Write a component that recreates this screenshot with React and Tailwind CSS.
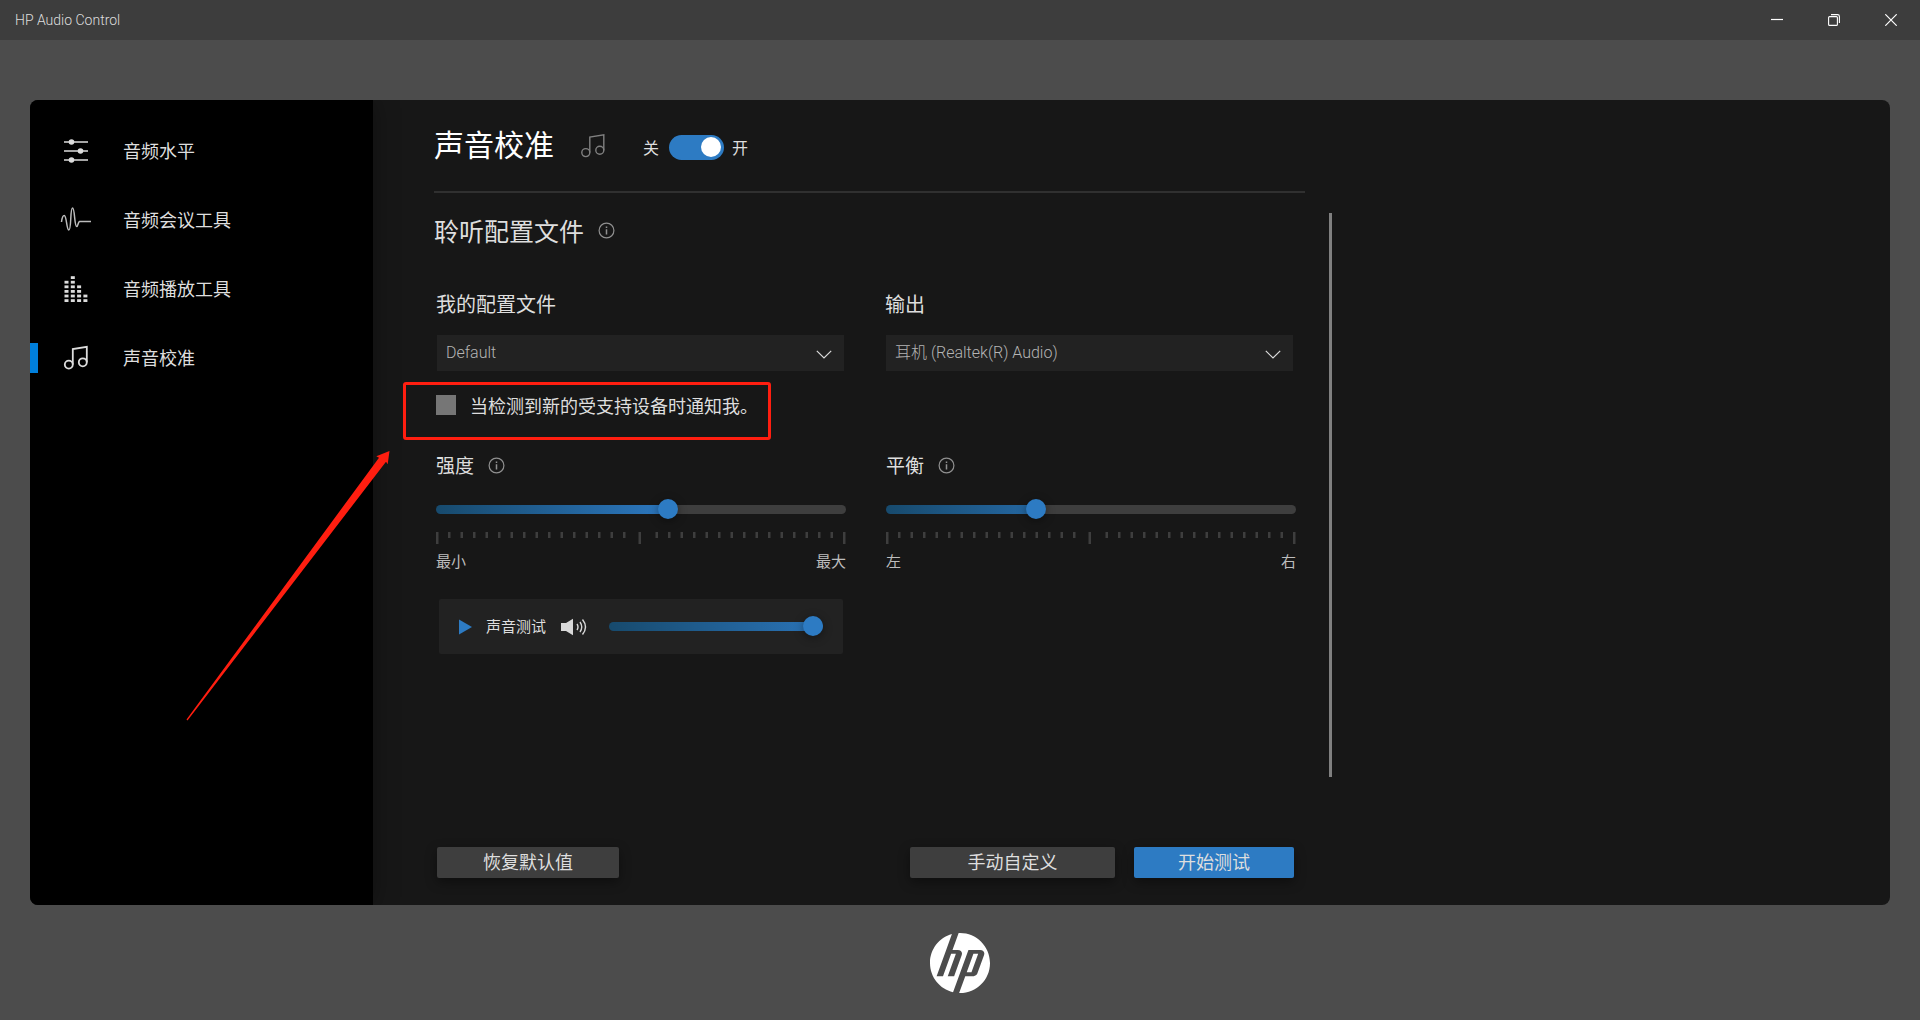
import { useState } from "react";
import { SiHp } from "react-icons/si";

const TICKS = [
  ...Array.from({ length: 15 }, (_, i) => 13.5 + i * 12.5),
  ...Array.from({ length: 15 }, (_, i) => 221 + i * 12.5),
];

function LevelsIcon() {
  return (
    <svg width="32" height="32" viewBox="0 0 32 32" fill="#dcdcdc" stroke="#dcdcdc" aria-hidden="true">
      <path d="M4 7h24M4 16h24M4 25h24" strokeWidth="1.4" />
      <circle cx="11.5" cy="7" r="2.8" stroke="none" />
      <circle cx="20.5" cy="16" r="2.8" stroke="none" />
      <circle cx="11.5" cy="25" r="2.8" stroke="none" />
    </svg>
  );
}

function WaveIcon() {
  return (
    <svg width="32" height="32" viewBox="0 0 32 32" fill="none" stroke="#bcbcbc" strokeWidth="1.5" aria-hidden="true">
      <path d="M1.5 18C2 14 3 11.5 4.2 11.5C6.8 11.5 6.4 26 8.8 26C11.6 26 10 4 12.5 4C15 4 14.2 22.5 16.8 22.5C18 22.5 18 18 19.5 17.5H31" />
    </svg>
  );
}

function BarsIcon() {
  const columns = [5, 6, 4, 2];
  return (
    <svg width="32" height="32" viewBox="0 0 32 32" fill="#dcdcdc" aria-hidden="true">
      {columns.map((count, col) =>
        Array.from({ length: count }, (_, row) => (
          <rect key={`${col}-${row}`} x={4.5 + col * 6.3} y={26.2 - row * 4.6} width="4" height="2.8" />
        ))
      )}
    </svg>
  );
}

function MusicIcon({ color = "#dcdcdc", width = 1.8 }) {
  return (
    <svg width="26" height="26" viewBox="0 0 26 26" fill="none" stroke={color} strokeWidth={width} aria-hidden="true">
      <circle cx="5.8" cy="19.6" r="4" />
      <circle cx="19.8" cy="17.3" r="4" />
      <path d="M9.8 19.6V4L23.8 1.9V17.3" />
    </svg>
  );
}

function InfoIcon() {
  return (
    <svg width="17" height="17" viewBox="0 0 17 17" fill="none" stroke="#909090" aria-hidden="true">
      <circle cx="8.5" cy="8.5" r="7.4" strokeWidth="1.2" />
      <path d="M8.5 7.2V12.5M8.5 4.5V6" strokeWidth="1.5" />
    </svg>
  );
}

function SpeakerIcon() {
  return (
    <svg width="26" height="18" viewBox="0 0 26 18" fill="none" stroke="#d8d8d8" strokeWidth="1.4" aria-hidden="true">
      <path d="M0 5H5L12 0.8V17.2L5 13H0Z" fill="#d8d8d8" stroke="none" />
      <path d="M16 6Q18 9 16 12M19 4Q22.5 9 19 14M21.500 1.500Q27.500 9 21.500 16.500" />
    </svg>
  );
}

function NavItem({ icon, label, active, onClick }) {
  return (
    <button
      type="button"
      onClick={onClick}
      className="relative flex h-[69px] w-full items-center gap-[31px] pl-[30px] text-left text-[18px]"
    >
      {active && <span className="absolute left-0 h-[30px] w-2 bg-[#007fdb]" />}
      <span className="flex w-8 justify-center">{icon}</span>
      {label}
    </button>
  );
}

function Select({ id, label, options }) {
  return (
    <div>
      <label htmlFor={id} className="block text-[20px] leading-6">
        {label}
      </label>
      <div className="relative mx-px mt-[19px]">
        <select
          id={id}
          className="block h-9 w-full appearance-none bg-[#222222] px-[9px] font-['Roboto','Noto_Sans_CJK_SC',sans-serif] text-[16px] font-light text-[#b4b4b4]"
        >
          {options.map((option) => (
            <option key={option}>{option}</option>
          ))}
        </select>
        <svg
          className="pointer-events-none absolute top-[15px] right-3"
          width="16"
          height="9"
          viewBox="0 0 16 9"
          fill="none"
          stroke="#dcdcdc"
          strokeWidth="1.2"
          aria-hidden="true"
        >
          <path d="M0.8 0.8L8 8L15.2 0.8" />
        </svg>
      </div>
    </div>
  );
}

function Slider({ id, label, value, onChange }) {
  return (
    <input
      id={id}
      type="range"
      aria-label={label}
      value={value}
      onChange={(e) => onChange(Number(e.target.value))}
      style={{
        backgroundImage: `linear-gradient(to right, transparent ${value}%, #3e3e3e ${value}%), linear-gradient(to right, #174a6d, #2c77be 230px)`,
      }}
      className="block h-[9px] w-full min-w-0 appearance-none rounded-full [&::-webkit-slider-thumb]:size-5 [&::-webkit-slider-thumb]:-translate-y-px [&::-webkit-slider-thumb]:appearance-none [&::-webkit-slider-thumb]:rounded-full [&::-webkit-slider-thumb]:bg-[#2d7bc3] [&::-webkit-slider-thumb]:shadow-[0_2px_10px_rgba(0,0,0,0.4)]"
    />
  );
}

function ScaledSlider({ id, label, low, high, initial }) {
  const [value, setValue] = useState(initial);

  return (
    <div>
      <div className="flex items-center gap-[14px]">
        <label htmlFor={id} className="text-[19px] leading-6">
          {label}
        </label>
        <InfoIcon />
      </div>
      <div className="mt-7">
        <Slider id={id} value={value} onChange={setValue} />
      </div>
      <svg
        className="mt-[18px] block h-3 w-full"
        viewBox="0 0 410 12"
        preserveAspectRatio="none"
        fill="#3e3e3e"
        aria-hidden="true"
      >
        {[0, 202.5, 407].map((x) => (
          <rect key={x} x={x} width="2.5" height="12" />
        ))}
        {TICKS.map((x) => (
          <rect key={x} x={x - 1.5} width="2.5" height="6" />
        ))}
      </svg>
      <div className="mt-2 flex justify-between text-[15px] leading-[18px] text-[#bdbdbd]">
        <span>{low}</span>
        <span>{high}</span>
      </div>
    </div>
  );
}

function TitleBar() {
  return (
    <header className="flex h-10 items-center justify-between bg-[#3d3d3d] pr-px pl-[15px]">
      <h1 className="font-['Roboto',sans-serif] text-[14px] font-light">HP Audio Control</h1>
      <div className="flex text-white">
        <button type="button" aria-label="Minimize" className="flex h-10 w-[57px] items-center justify-center">
          <svg width="12" height="12" viewBox="0 0 12 12" fill="none" stroke="currentColor" strokeWidth="1.2">
            <path d="M0 5.5H12" />
          </svg>
        </button>
        <button type="button" aria-label="Restore" className="flex h-10 w-[57px] items-center justify-center">
          <svg width="12" height="12" viewBox="0 0 12 12" fill="none" stroke="currentColor" strokeWidth="1.1">
            <rect x="0.6" y="2.6" width="8.8" height="8.8" rx="1" />
            <path d="M3 0.6H9.5Q11.4 0.6 11.4 2.5V9" />
          </svg>
        </button>
        <button type="button" aria-label="Close" className="flex h-10 w-[57px] items-center justify-center">
          <svg width="12" height="12" viewBox="0 0 12 12" fill="none" stroke="currentColor" strokeWidth="1.2">
            <path d="M0.3 0.3L11.7 11.7M11.7 0.3L0.3 11.7" />
          </svg>
        </button>
      </div>
    </header>
  );
}

const NAV = [
  { label: "音频水平", icon: <LevelsIcon /> },
  { label: "音频会议工具", icon: <WaveIcon /> },
  { label: "音频播放工具", icon: <BarsIcon /> },
  { label: "声音校准", icon: <MusicIcon /> },
];

function App() {
  const [active, setActive] = useState("声音校准");
  const [enabled, setEnabled] = useState(true);
  const [volume, setVolume] = useState(100);

  return (
    <div className="flex min-h-screen flex-col bg-[#4c4c4c] font-['Noto_Sans_CJK_SC',sans-serif] text-[#dedede]">
      <TitleBar />

      <div className="relative mx-[30px] mt-[60px] flex flex-1 overflow-hidden rounded-lg bg-[#171717]">
        <nav className="w-[343px] shrink-0 bg-black pt-4 shadow-[0_0_24px_rgba(0,0,0,0.35)]">
          {NAV.map((item) => (
            <NavItem
              key={item.label}
              icon={item.icon}
              label={item.label}
              active={active === item.label}
              onClick={() => setActive(item.label)}
            />
          ))}
        </nav>

        <main className="flex max-w-[959px] min-w-0 flex-1 flex-col pb-[27px] pl-[61px]">
          <div className="mr-[27px] flex h-[93px] items-center border-b-2 border-[#303030]">
            <h2 className="font-['Roboto','Noto_Sans_CJK_SC',sans-serif] text-[30px] text-white">声音校准</h2>
            <span className="ml-[26px]">
              <MusicIcon color="#808080" width={1.4} />
            </span>
            <label className="ml-[37px] flex items-center pt-[3px] text-[16px]">
              关
              <input
                type="checkbox"
                role="switch"
                checked={enabled}
                onChange={(e) => setEnabled(e.target.checked)}
                className="peer sr-only"
              />
              <span className="mr-2 ml-[10px] flex h-[25px] w-[55px] items-center rounded-full bg-[#555555] px-[3px] peer-checked:justify-end peer-checked:bg-[#2d7bc3]">
                <span className="size-5 rounded-full bg-white" />
              </span>
              开
            </label>
          </div>

          <div className="mt-5 flex gap-[33px]">
            <div className="min-w-0 flex-1">
              <div className="flex items-center gap-[14px]">
                <h3 className="text-[25px] leading-[34px]">聆听配置文件</h3>
                <InfoIcon />
              </div>

              <div className="ml-0.5">
                <div className="mt-[45px] mr-0.5 grid grid-cols-2 gap-10">
                  <Select id="profile" label="我的配置文件" options={["Default"]} />
                  <Select id="output" label="输出" options={["耳机 (Realtek(R) Audio)"]} />
                </div>

                <div className="relative mt-6 w-fit">
                  <label className="flex h-5 items-center gap-[14px] text-[18px]">
                    <input type="checkbox" className="size-5 appearance-none bg-[#767676] checked:bg-[#2d7bc3]" />
                    当检测到新的受支持设备时通知我。
                  </label>
                  <div className="pointer-events-none absolute -top-[13px] -bottom-[25px] -left-[33px] w-[368px] rounded-[3px] border-3 border-[#ff1e10]" />
                </div>

                <div className="mt-[38px] grid grid-cols-2 gap-10">
                  <ScaledSlider id="strength" label="强度" low="最小" high="最大" initial={57} />
                  <ScaledSlider id="balance" label="平衡" low="左" high="右" initial={36} />

                  <div className="mx-[3px] -mt-[11px] flex h-[55px] items-center rounded-xs bg-[#222222] px-5">
                    <button type="button" className="flex shrink-0 items-center gap-[14px] text-[15px] whitespace-nowrap">
                      <svg width="13" height="16" viewBox="0 0 13 16" fill="#2d7bc3" aria-hidden="true">
                        <path d="M0 0.5L13 8L0 15.5Z" />
                      </svg>
                      声音测试
                    </button>
                    <span className="mr-[22px] ml-[15px] shrink-0">
                      <SpeakerIcon />
                    </span>
                    <Slider id="volume" label="声音测试" value={volume} onChange={setVolume} />
                  </div>
                </div>
              </div>
            </div>

            <div className="h-[564px] w-[3px] shrink-0 bg-[#808080]" />
          </div>

          <div className="mt-auto mr-[38px] ml-[3px] flex font-['Roboto','Noto_Sans_CJK_SC',sans-serif] text-[18px] leading-[31px]">
            <button type="button" className="mr-auto w-[182px] rounded-xs bg-[#3e3e3e] shadow-[0_4px_12px_rgba(0,0,0,0.4)]">
              恢复默认值
            </button>
            <button type="button" className="mr-[19px] w-[205px] rounded-xs bg-[#3e3e3e] shadow-[0_4px_12px_rgba(0,0,0,0.4)]">
              手动自定义
            </button>
            <button type="button" className="w-40 rounded-xs bg-[#2d7bc3] shadow-[0_4px_12px_rgba(0,0,0,0.4)]">
              开始测试
            </button>
          </div>
        </main>

        <svg
          className="pointer-events-none absolute top-[350px] left-[156px]"
          width="206"
          height="272"
          viewBox="0 0 206 272"
          fill="#ff1e10"
          aria-hidden="true"
        >
          <path d="M203.5 1L190.3 6.3L193 7.7L0.5 269.5L1.5 270.5L200 11.7L201.7 14.3Z" />
        </svg>
      </div>

      <footer className="flex h-[115px] items-center justify-center">
        <SiHp className="size-[60px] text-white" title="HP" />
      </footer>
    </div>
  );
}

export default App;
